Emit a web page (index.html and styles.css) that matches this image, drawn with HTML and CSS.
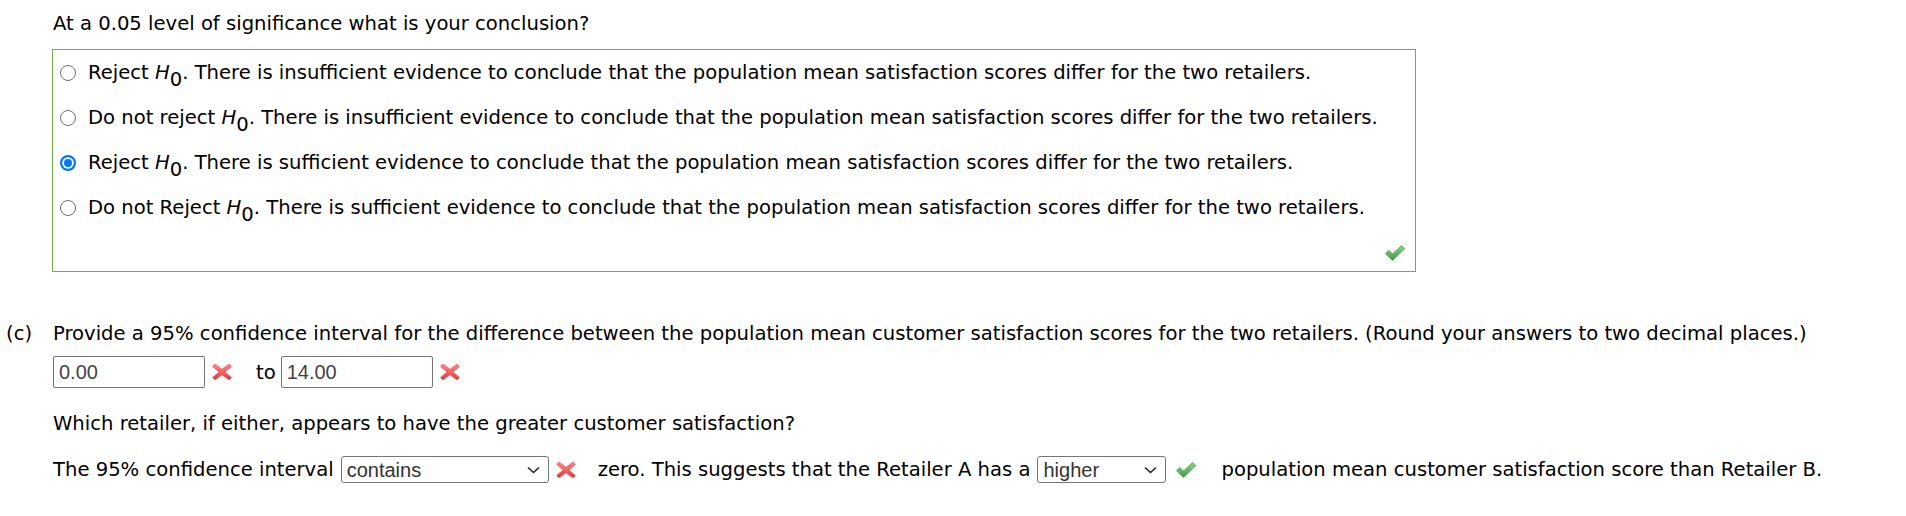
FILE: index.html
```html
<!DOCTYPE html>
<html lang="en">
<head>
<meta charset="utf-8">
<title>Conclusion</title>
<link rel="stylesheet" href="styles.css">
</head>
<body>
<div class="page">
  <p class="question">At a 0.05 level of significance what is your conclusion?</p>
  <div class="answer-box">
    <label class="opt"><input type="radio" name="c" class="radio"><span>Reject <i>H</i><sub>0</sub>. There is insufficient evidence to conclude that the population mean satisfaction scores differ for the two retailers.</span></label>
    <label class="opt"><input type="radio" name="c" class="radio"><span>Do not reject <i>H</i><sub>0</sub>. There is insufficient evidence to conclude that the population mean satisfaction scores differ for the two retailers.</span></label>
    <label class="opt"><input type="radio" name="c" class="radio" checked><span>Reject <i>H</i><sub>0</sub>. There is sufficient evidence to conclude that the population mean satisfaction scores differ for the two retailers.</span></label>
    <label class="opt"><input type="radio" name="c" class="radio"><span>Do not Reject <i>H</i><sub>0</sub>. There is sufficient evidence to conclude that the population mean satisfaction scores differ for the two retailers.</span></label>
    <div class="box-foot">
      <svg class="icon-check" width="22" height="18" viewBox="0 0 22 18"><defs><linearGradient id="gc" x1="0" y1="0" x2="0" y2="1"><stop offset="0" stop-color="#8fd48f"/><stop offset="1" stop-color="#3f9a3f"/></linearGradient></defs><path d="M1.5 9.5 L5 6.5 L8.5 10 L17.5 1.5 L20.8 4.6 L8.6 16.5 Z" fill="url(#gc)" stroke="#4c9a4c" stroke-width="0.8" stroke-linejoin="round"/></svg>
    </div>
  </div>

  <div class="part">
    <div class="part-label">(c)</div>
    <div class="part-body">
      <p class="line">Provide a 95% confidence interval for the difference between the population mean customer satisfaction scores for the two retailers. (Round your answers to two decimal places.)</p>
      <div class="line row">
        <input class="field" type="text" value="0.00">
        <svg class="icon-x" width="20" height="18" viewBox="0 0 20 18"><defs><linearGradient id="gx" x1="0" y1="0" x2="0" y2="1"><stop offset="0" stop-color="#ff8a8a"/><stop offset="1" stop-color="#e03a3a"/></linearGradient></defs><path d="M3 1 L10 6.3 L17 1 L19.5 3.4 L13 9 L19.5 14.6 L17 17 L10 11.7 L3 17 L0.5 14.6 L7 9 L0.5 3.4 Z" fill="url(#gx)" stroke="#e04848" stroke-width="0.6" stroke-linejoin="round"/></svg>
        <span class="to">to</span>
        <input class="field" type="text" value="14.00">
        <svg class="icon-x" width="20" height="18" viewBox="0 0 20 18"><path d="M3 1 L10 6.3 L17 1 L19.5 3.4 L13 9 L19.5 14.6 L17 17 L10 11.7 L3 17 L0.5 14.6 L7 9 L0.5 3.4 Z" fill="url(#gx)" stroke="#e04848" stroke-width="0.6" stroke-linejoin="round"/></svg>
      </div>
      <p class="line">Which retailer, if either, appears to have the greater customer satisfaction?</p>
      <div class="line row">
        <span>The 95% confidence interval</span>
        <span class="select-wrap wide"><select class="select"><option>contains</option></select><svg class="chev" width="13" height="8" viewBox="0 0 13 8"><path d="M1 1.5 L6.5 6.5 L12 1.5" fill="none" stroke="#222" stroke-width="1.6"/></svg></span>
        <svg class="icon-x sel-x" width="20" height="18" viewBox="0 0 20 18"><path d="M3 1 L10 6.3 L17 1 L19.5 3.4 L13 9 L19.5 14.6 L17 17 L10 11.7 L3 17 L0.5 14.6 L7 9 L0.5 3.4 Z" fill="url(#gx)" stroke="#e04848" stroke-width="0.6" stroke-linejoin="round"/></svg>
        <span class="after-x">zero. This suggests that the Retailer A has a</span>
        <span class="select-wrap narrow"><select class="select"><option>higher</option></select><svg class="chev" width="13" height="8" viewBox="0 0 13 8"><path d="M1 1.5 L6.5 6.5 L12 1.5" fill="none" stroke="#222" stroke-width="1.6"/></svg></span>
        <svg class="icon-check small" width="22" height="18" viewBox="0 0 22 18"><path d="M1.5 9.5 L5 6.5 L8.5 10 L17.5 1.5 L20.8 4.6 L8.6 16.5 Z" fill="url(#gc)" stroke="#4c9a4c" stroke-width="0.8" stroke-linejoin="round"/></svg>
        <span class="after-check">population mean customer satisfaction score than Retailer B.</span>
      </div>
    </div>
  </div>
</div>
</body>
</html>
```

FILE: styles.css
```css
html, body {
  margin: 0;
  padding: 0;
  background: #ffffff;
}

body {
  font-family: "DejaVu Sans", Verdana, sans-serif;
  font-size: 19.6px;
  color: #000;
}

.page {
  padding: 12px 0 0 0;
}

.question {
  margin: 0 0 0 53px;
  line-height: 23px;
}

.answer-box {
  margin: 14px 0 0 52px;
  width: 1364px;
  height: 223px;
  border: 1px solid #74ad4c;
  box-sizing: border-box;
  padding: 0 0 0 7px;
  display: flex;
  flex-direction: column;
}

.opt {
  display: flex;
  align-items: center;
  height: 45px;
  line-height: 23px;
}

.radio {
  appearance: none;
  -webkit-appearance: none;
  width: 16px;
  height: 16px;
  margin: 0 12px 0 0;
  border: 1px solid #6f6f6f;
  border-radius: 50%;
  box-sizing: border-box;
  background: #fff;
  flex: none;
}

.radio:checked {
  border: 2px solid #0075ff;
  box-shadow: inset 0 0 0 2px #fff;
  background: #0075ff;
}

sub {
  font-size: 19.6px;
  vertical-align: -7px;
  line-height: 0;
}

.box-foot {
  display: flex;
  justify-content: flex-end;
  padding: 14px 9px 0 0;
}

.part {
  display: flex;
  margin-top: 50px;
}

.part-label {
  width: 53px;
  padding-left: 6px;
  box-sizing: border-box;
  line-height: 23px;
  flex: none;
}

.part-body {
  display: flex;
  flex-direction: column;
}

.line {
  margin: 0;
  line-height: 23px;
}

.row {
  display: flex;
  align-items: center;
}

.row > * {
  flex: none;
}

.part-body > .row:nth-child(2) {
  margin-top: 11px;
}

.part-body > .line:nth-child(3) {
  margin-top: 24px;
}

.part-body > .row:nth-child(4) {
  margin-top: 21px;
}

.field {
  width: 152px;
  height: 32px;
  box-sizing: border-box;
  border: 1px solid #767676;
  border-radius: 2px;
  padding: 0 5px;
  font-family: "Liberation Sans", Arial, sans-serif;
  font-size: 20px;
  color: #444;
  margin: 0;
}

.icon-x {
  margin: 0 24px 0 7px;
}

.icon-x.sel-x {
  margin-right: 22px;
}

.to {
  margin-right: 5px;
}

.select-wrap {
  position: relative;
  display: inline-block;
  margin-left: 7px;
}

.select {
  appearance: none;
  -webkit-appearance: none;
  display: block;
  height: 27px;
  box-sizing: border-box;
  border: 1px solid #767676;
  border-radius: 3px;
  background: #fff;
  font-family: "Liberation Sans", Arial, sans-serif;
  font-size: 20px;
  color: #333;
  padding: 0 5px;
  margin: 0;
}

.wide .select { width: 208px; }
.narrow .select { width: 129px; }

.chev {
  position: absolute;
  right: 9px;
  top: 10px;
  pointer-events: none;
}

.icon-check.small {
  margin: 0 24px 0 9px;
}
```
